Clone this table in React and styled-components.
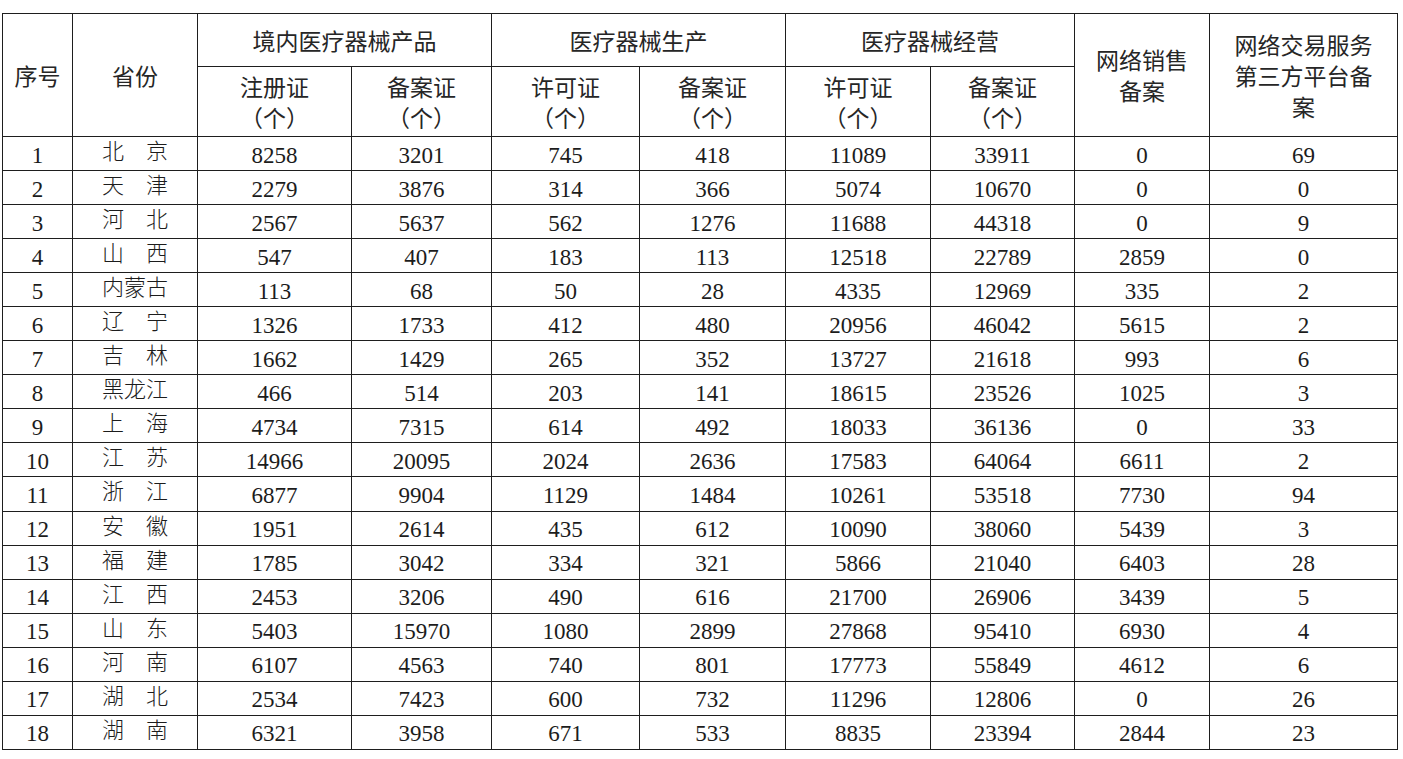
import styled, { createGlobalStyle } from "styled-components"

const GlobalStyle = createGlobalStyle`
  html, body {
    margin: 0;
    padding: 0;
    background: #ffffff;
  }
`

const Page = styled.div`
  padding: 13px 0 0 2px;
  background: #fff;
  min-height: 100vh;
  box-sizing: border-box;
`

const Table = styled.table`
  width: 1395px;
  table-layout: fixed;
  border-collapse: collapse;
  color: #1c1c1c;
`

const Th = styled.th`
  border: 1px solid #1e1e1e;
  font-family: "Noto Sans CJK SC", "Noto Sans", sans-serif;
  font-weight: 400;
  font-size: 23px;
  line-height: 31px;
  text-align: center;
  vertical-align: middle;
  padding: 0 ${props => props.$pad || 4}px;
  color: #262626;
`

const HeadRow = styled.tr`
  height: ${props => props.$h}px;
`

const Row = styled.tr`
  height: 34.06px;
`

const Td = styled.td`
  border: 1px solid #1e1e1e;
  font-family: "Liberation Serif", "Times New Roman", serif;
  font-size: 23px;
  line-height: 24px;
  text-align: center;
  vertical-align: middle;
  padding: 4px 0 0 0;
  color: #1c1c1c;
`

const Province = styled(Td)`
  font-family: "Noto Sans CJK SC", "Noto Sans", sans-serif;
  font-weight: 300;
  font-size: 22px;
  line-height: 20px;
  padding: 0 0 9px 0;
`

const widths = [70, 125, 154, 140, 148, 146, 145, 144, 135, 188]

const rows = [
  ["1", "北　京", 8258, 3201, 745, 418, 11089, 33911, 0, 69],
  ["2", "天　津", 2279, 3876, 314, 366, 5074, 10670, 0, 0],
  ["3", "河　北", 2567, 5637, 562, 1276, 11688, 44318, 0, 9],
  ["4", "山　西", 547, 407, 183, 113, 12518, 22789, 2859, 0],
  ["5", "内蒙古", 113, 68, 50, 28, 4335, 12969, 335, 2],
  ["6", "辽　宁", 1326, 1733, 412, 480, 20956, 46042, 5615, 2],
  ["7", "吉　林", 1662, 1429, 265, 352, 13727, 21618, 993, 6],
  ["8", "黑龙江", 466, 514, 203, 141, 18615, 23526, 1025, 3],
  ["9", "上　海", 4734, 7315, 614, 492, 18033, 36136, 0, 33],
  ["10", "江　苏", 14966, 20095, 2024, 2636, 17583, 64064, 6611, 2],
  ["11", "浙　江", 6877, 9904, 1129, 1484, 10261, 53518, 7730, 94],
  ["12", "安　徽", 1951, 2614, 435, 612, 10090, 38060, 5439, 3],
  ["13", "福　建", 1785, 3042, 334, 321, 5866, 21040, 6403, 28],
  ["14", "江　西", 2453, 3206, 490, 616, 21700, 26906, 3439, 5],
  ["15", "山　东", 5403, 15970, 1080, 2899, 27868, 95410, 6930, 4],
  ["16", "河　南", 6107, 4563, 740, 801, 17773, 55849, 4612, 6],
  ["17", "湖　北", 2534, 7423, 600, 732, 11296, 12806, 0, 26],
  ["18", "湖　南", 6321, 3958, 671, 533, 8835, 23394, 2844, 23],
]

const SubHead = ({ label }) => (
  <Th>
    {label}
    <br />
    （个）
  </Th>
)

export default function App() {
  return (
    <Page>
      <GlobalStyle />
      <Table>
        <colgroup>
          {widths.map((w, i) => (
            <col key={i} style={{ width: w }} />
          ))}
        </colgroup>
        <thead>
          <HeadRow $h={53}>
            <Th rowSpan={2}>序号</Th>
            <Th rowSpan={2}>省份</Th>
            <Th colSpan={2}>境内医疗器械产品</Th>
            <Th colSpan={2}>医疗器械生产</Th>
            <Th colSpan={2}>医疗器械经营</Th>
            <Th rowSpan={2} $pad={14}>网络销售备案</Th>
            <Th rowSpan={2} $pad={14}>网络交易服务第三方平台备案</Th>
          </HeadRow>
          <HeadRow $h={70}>
            <SubHead label="注册证" />
            <SubHead label="备案证" />
            <SubHead label="许可证" />
            <SubHead label="备案证" />
            <SubHead label="许可证" />
            <SubHead label="备案证" />
          </HeadRow>
        </thead>
        <tbody>
          {rows.map(r => (
            <Row key={r[0]}>
              <Td>{r[0]}</Td>
              <Province>{r[1]}</Province>
              {r.slice(2).map((v, i) => (
                <Td key={i}>{v}</Td>
              ))}
            </Row>
          ))}
        </tbody>
      </Table>
    </Page>
  )
}
